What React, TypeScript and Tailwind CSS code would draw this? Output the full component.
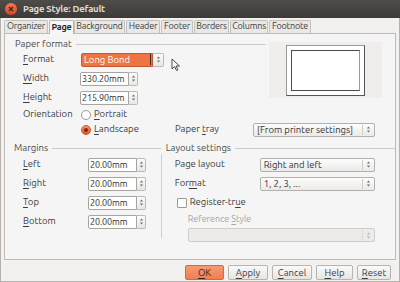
const UI = "font-['Ubuntu','Noto_Sans','DejaVu_Sans',sans-serif]";

function Arrows({ dim }: { dim?: boolean }) {
  return (
    <svg width="5" height="9" viewBox="0 0 5 9" className={dim ? "fill-[#b5b3b0]" : "fill-[#707070]"}>
      <path d="M2.5 1.5 L4.2 3.6 L0.8 3.6 Z" />
      <path d="M2.5 7.5 L4.2 5.4 L0.8 5.4 Z" />
    </svg>
  );
}

function U({ children }: { children: string }) {
  return <span className="underline underline-offset-[2px] decoration-[1px]">{children}</span>;
}

function Spin({ value, w }: { value: string; w: string }) {
  return (
    <div className="flex h-[14px]">
      <div className={`${w} h-full bg-white border border-[#a8a5a0] rounded-l-[2px] pl-[1px] text-[9px] tracking-[-0.1px] leading-[12px] text-[#2e2e2e] whitespace-nowrap overflow-hidden`}>
        {value}
      </div>
      <div className="w-[9px] h-full border border-l-0 border-[#bdbab5] rounded-r-[2px] bg-gradient-to-b from-[#fbfbfa] to-[#e8e7e5] flex items-center justify-center">
        <Arrows />
      </div>
    </div>
  );
}

function Drop({ value, w, disabled }: { value?: string; w: string; disabled?: boolean }) {
  return (
    <div
      className={`${w} h-[14px] flex items-center rounded-[2px] border ${
        disabled ? "border-[#d0cdc9] bg-[#ecebea]" : "border-[#b3b0ab] bg-gradient-to-b from-[#fdfdfd] to-[#ebeae8]"
      }`}
    >
      <div className="flex-1 pl-[3px] text-[9.5px] leading-[12px] text-[#333] truncate">{value}</div>
      <div className={`h-[10px] w-px ${disabled ? "bg-[#dcdad7]" : "bg-[#cfccc8]"}`} />
      <div className="w-[11px] flex justify-center">
        <Arrows dim={disabled} />
      </div>
    </div>
  );
}

function Header({ title, line }: { title: string; line: string }) {
  return (
    <div className="flex items-center h-[12px] gap-[4px] whitespace-nowrap">
      <span className="text-[9.5px] text-[#4a4a4a] leading-[12px] shrink-0">{title}</span>
      <div className={`h-px bg-[#cdcac6] shrink-0 ${line}`} />
    </div>
  );
}

function Radio({ checked }: { checked?: boolean }) {
  return checked ? (
    <div className="w-[10px] h-[10px] rounded-full bg-gradient-to-b from-[#f4956b] to-[#e2562a] border border-[#c9532a] flex items-center justify-center">
      <div className="w-[4px] h-[4px] rounded-full bg-[#7a2c12]" />
    </div>
  ) : (
    <div className="w-[10px] h-[10px] rounded-full bg-white border border-[#9c9994]" />
  );
}

const tabs = [
  ["Organizer", "w-[44px]"],
  ["Page", "w-[25px]"],
  ["Background", "w-[51px]"],
  ["Header", "w-[34px]"],
  ["Footer", "w-[32px]"],
  ["Borders", "w-[35px]"],
  ["Columns", "w-[38px]"],
  ["Footnote", "w-[42px]"],
];

const btn = "h-[15px] rounded-[2px] border text-[9.5px] leading-[13px] flex items-center justify-center";
const plain = "bg-gradient-to-b from-[#fafafa] to-[#e6e5e3] border-[#b7b4af]";
const lbl = "text-[9.5px] whitespace-nowrap";

export default function App() {
  return (
    <div className={`${UI} w-[400px] h-[282px] bg-[#f2f1f0] border-x border-b border-[#b6b2ad] flex flex-col text-[#3c3c3c]`}>
      {/* title bar */}
      <div className="h-[18px] bg-gradient-to-b from-[#4d4c48] to-[#3c3b37] flex items-center pl-[5px] gap-[6px] -mx-px">
        <div className="w-[12px] h-[12px] rounded-full bg-gradient-to-b from-[#f47a4f] to-[#d9461d] flex items-center justify-center">
          <svg width="6" height="6" viewBox="0 0 6 6" stroke="#3a2a22" strokeWidth="1.4">
            <path d="M1 1 L5 5 M5 1 L1 5" />
          </svg>
        </div>
        <span className="text-[9.5px] font-bold text-[#dfdbd2] tracking-[-0.2px]">Page Style: Default</span>
      </div>

      {/* tabs */}
      <div className="flex pl-[3px] mt-[2px] h-[13px] items-end">
        {tabs.map(([t, w]) =>
          t === "Page" ? (
            <div key={t} className={`${w} h-[14px] bg-[#f7f7f7] border border-b-0 border-[#b8b5b0] rounded-t-[2px] text-[9px] font-bold text-[#2a2a2a] flex items-center justify-center -mb-px z-10 tracking-[-0.2px]`}>
              {t}
            </div>
          ) : (
            <div key={t} className={`${w} h-[13px] bg-[#e9e8e6] border border-b-0 border-[#c4c1bc] rounded-t-[2px] text-[9px] text-[#3c3c3c] flex items-center justify-center mr-px tracking-[-0.2px]`}>
              {t}
            </div>
          )
        )}
      </div>

      {/* panel */}
      <div className="mx-[3px] h-[227px] bg-[#f5f5f5] border border-[#bebab5] pt-[4px] flex flex-col">
        <div className="flex">
          <div className="w-[262px]">
            <div className="pl-[10px]">
              <Header title="Paper format" line="w-[190px]" />
            </div>
            <div className="pl-[18px]">
              <div className="h-[19px] flex items-center">
                <span className={`w-[58px] ${lbl}`}><U>F</U>ormat</span>
                <div className="flex h-[14px]">
                  <div className="w-[72px] h-full bg-[#ee7442] border border-[#c25a30] rounded-l-[2px] pl-[2px] text-[9.5px] leading-[12px] text-white flex items-center">
                    Long Bond
                    <div className="ml-auto mr-[1px] w-px h-[11px] bg-[#3a2a20]" />
                  </div>
                  <div className="w-[11px] h-full border border-l-0 border-[#bdbab5] rounded-r-[2px] bg-gradient-to-b from-[#fbfbfa] to-[#e8e7e5] flex items-center justify-center">
                    <Arrows />
                  </div>
                  <svg width="10" height="14" viewBox="0 0 10 14" className="ml-[7px] mt-[5px]">
                    <path d="M1 1 L1 11 L3.5 8.5 L5.5 12.5 L7 11.8 L5 8 L8.5 8 Z" fill="#fff" stroke="#333" strokeWidth="0.9" strokeLinejoin="round" />
                  </svg>
                </div>
              </div>
              <div className="h-[19px] flex items-center">
                <span className={`w-[57px] ${lbl}`}><U>W</U>idth</span>
                <Spin value="330.20mm" w="w-[49px]" />
              </div>
              <div className="h-[19px] flex items-center">
                <span className={`w-[57px] ${lbl}`}><U>H</U>eight</span>
                <Spin value="215.90mm" w="w-[49px]" />
              </div>
            </div>
          </div>
          <div className="ml-[2px] mt-[4px] w-[113px] h-[56px] bg-[#efeeec] flex justify-center items-center">
            <div className="w-[79px] h-[51px] bg-white border border-[#555] border-l-[#999] border-t-[#999] flex items-center justify-center">
              <div className="w-[69px] h-[41px] bg-white border border-[#4a4a4a] border-r-[#999]" />
            </div>
          </div>
        </div>

        <div className="pl-[18px]">
          <div className="h-[15px] flex items-center">
            <span className={`w-[58px] ${lbl}`}>Orientation</span>
            <Radio />
            <span className={`ml-[3px] ${lbl}`}><U>P</U>ortrait</span>
          </div>
          <div className="h-[15px] flex items-center">
            <span className="w-[58px]" />
            <Radio checked />
            <span className={`ml-[3px] w-[81px] ${lbl}`}><U>L</U>andscape</span>
            <span className={`w-[78px] ${lbl}`}>Paper <U>t</U>ray</span>
            <Drop value="[From printer settings]" w="w-[122px]" />
          </div>
        </div>

        <div className="flex mt-[5px]">
          <div className="w-[157px]">
            <div className="pl-[9px]">
              <Header title="Margins" line="w-[109px]" />
            </div>
            <div className="pl-[18px] pt-px">
              {[
                ["L", "eft"],
                ["R", "ight"],
                ["T", "op"],
                ["B", "ottom"],
              ].map(([a, b]) => (
                <div key={a} className="h-[19px] flex items-center">
                  <span className={`w-[65px] ${lbl}`}><U>{a}</U>{b}</span>
                  <Spin value="20.00mm" w="w-[49px]" />
                </div>
              ))}
            </div>
          </div>
          <div className="flex-1">
            <div className="pl-[4px]">
              <Header title="Layout settings" line="w-[160px]" />
            </div>
            <div className="ml-[-1px] border-l border-[#d3d0cc] h-[84px] pl-[13px] pt-px">
              <div className="h-[19px] flex items-center">
                <span className={`w-[85px] ${lbl}`}>Page layout</span>
                <Drop value="Right and left" w="w-[115px]" />
              </div>
              <div className="h-[19px] flex items-center">
                <span className={`w-[85px] ${lbl}`}>For<U>m</U>at</span>
                <Drop value="1, 2, 3, ..." w="w-[115px]" />
              </div>
              <div className="h-[19px] flex items-center pl-[2px]">
                <div className="w-[10px] h-[10px] bg-white border border-[#9c9994] rounded-[1px]" />
                <span className={`ml-[3px] ${lbl}`}>Register-tr<U>u</U>e</span>
              </div>
              <div className="pl-[13px] pt-[2px]">
                <div className="text-[9px] leading-[11px] text-[#a7a4a0]">Reference <U>S</U>tyle</div>
                <div className="mt-[3px]">
                  <Drop w="w-[187px]" disabled />
                </div>
              </div>
            </div>
          </div>
        </div>
      </div>

      {/* buttons */}
      <div className="flex justify-end gap-[4px] pr-[8px] mt-[5px]">
        <div className={`${btn} w-[39px] bg-gradient-to-b from-[#f69a73] to-[#ef7f52] border-[#d3693f] text-[#3a2418]`}>
          <U>O</U>K
        </div>
        <div className={`${btn} w-[40px] ${plain}`}>
          <U>A</U>pply
        </div>
        <div className={`${btn} w-[40px] ${plain}`}>
          <U>C</U>ancel
        </div>
        <div className={`${btn} w-[37px] ${plain}`}>
          <U>H</U>elp
        </div>
        <div className={`${btn} w-[34px] ${plain}`}>
          <U>R</U>eset
        </div>
      </div>
    </div>
  );
}
